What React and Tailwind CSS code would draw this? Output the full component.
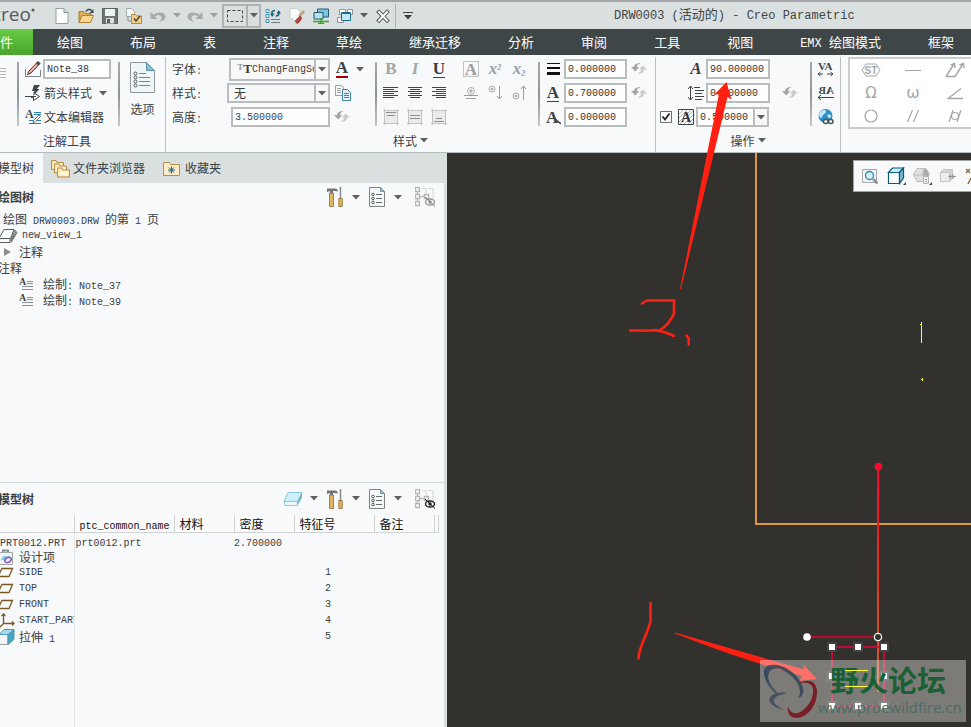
import React, { useState } from 'react';

const MENU = ['绘图', '布局', '表', '注释', '草绘', '继承迁移', '分析', '审阅', '工具', '视图', 'EMX', '框架'];

const FEATURES = [
  { name: 'SIDE', id: 1, icon: 'plane' },
  { name: 'TOP', id: 2, icon: 'plane' },
  { name: 'FRONT', id: 3, icon: 'plane' },
  { name: 'START_PART', id: 4, icon: 'csys' },
  { name: '拉伸', suffix: '1', id: 5, icon: 'extrude' },
];

// Latin text is set smaller than the Chinese text around it
const Latin = ({ children }) => (
  <span className="font-['Liberation_Mono',monospace] text-[10px] leading-none">{children}</span>
);

const Caret = () => (
  <svg width="8" height="5" viewBox="0 0 8 5" className="shrink-0">
    <path d="M0 0h8L4 4.600z" fill="#5d6060" />
  </svg>
);

const Svg = ({ size = 16, children }) => (
  <svg width={size} height={size} viewBox="0 0 16 16" fill="none" className="shrink-0">
    {children}
  </svg>
);

const IconButton = ({ label, className = 'w-6 h-6', children }) => (
  <button type="button" aria-label={label} className={`flex shrink-0 items-center justify-center ${className}`}>
    {children}
  </button>
);

const CaretButton = ({ label = '更多', className = 'w-[13px] h-6' }) => (
  <IconButton label={label} className={className}>
    <Caret />
  </IconButton>
);

const Refresh = () => (
  <IconButton label="重置" className="h-6 w-4">
    <Svg>
      <path d="M9.500 2C5.500 2 3.200 3.500 2.800 6H0l4.200 4.500L8.200 6H5.800C6 4.300 7.500 3.200 9.500 2z" fill="#a2a6a6" />
      <path d="M6.500 13c4 0 6.300-1.500 6.700-4.500H16l-4.200-4-4 4h2.400c-.2 2-1.700 3.300-3.700 4.500z" fill="#c9cccc" />
    </Svg>
  </IconButton>
);

const NumberBox = ({ label, value, className = 'w-[63px]' }) => (
  <input
    type="text"
    aria-label={label}
    defaultValue={value}
    className={`h-5 shrink-0 border-2 border-[#b9bdbd] bg-white px-[2px] font-['Liberation_Mono',monospace] text-[10px] text-[#333] outline-none ${className}`}
  />
);

const Divider = () => <div className="mt-[5px] h-16 w-[2px] shrink-0 bg-gradient-to-b from-[#a4aaaa] via-[#8d9494] to-[#c3c8c8]" />;

const Undo = ({ flip }) => (
  <svg width="16" height="16" viewBox="0 0 16 16" className={flip ? '-scale-x-100' : ''}>
    <path d="M.5 4v7h7L5 8.600C7.500 6.500 11 7 11.500 9.500c.2 1.600-.8 3-2.500 4.300 4-.6 6.500-2.500 6.500-5.500 0-4-7-5.500-12-1.600z" fill="#a7abab" />
  </svg>
);

const TitleBar = () => (
  <header className="flex h-[29px] shrink-0 items-center overflow-hidden whitespace-nowrap border-t-2 border-[#a4a5a9] bg-[#dae0df]">
    <div className="-ml-2 flex w-[58px] shrink-0 items-center pb-1 font-['Open_Sans',sans-serif] text-[19px] font-medium leading-6 text-[#55595b]">
      creo
      <svg width="4" height="12" viewBox="0 0 4 12"><circle cx="2" cy="2" r="1.500" fill="#55595b" /></svg>
    </div>
    <IconButton label="新建">
      <Svg>
        <path d="M2 .5h8l4 4v11H2z" fill="#fdfdfd" stroke="#9a9fa0" />
        <path d="M10 .5v4h4" fill="#cfe0e8" stroke="#8198a3" />
      </Svg>
    </IconButton>
    <IconButton label="打开">
      <Svg>
        <path d="M1 14.500V3.500h5l1.500 2H13v3" fill="#e0ad55" stroke="#a97c32" />
        <path d="M1 14.500l3-7h11.500l-3 7z" fill="#f9d58f" stroke="#b1843a" />
        <path d="M8 3.500C9 1 12 .8 13.500 2.500" stroke="#3d4446" strokeWidth="1.500" />
        <path d="M15.500 1v4h-4z" fill="#3d4446" />
      </Svg>
    </IconButton>
    <IconButton label="保存">
      <Svg>
        <path d="M.5 .5h15v15H.5z" fill="#6d7578" stroke="#5a6163" />
        <path d="M3 1h10v7H3z" fill="#eef3f4" />
        <path d="M4 10h8v5.500H4z" fill="#dde1e2" />
        <path d="M5 11h3v4H5z" fill="#565d60" />
      </Svg>
    </IconButton>
    <IconButton label="检入">
      <Svg>
        <path d="M.5 .5h5l3 3v5h-8z" fill="#f5f7f7" stroke="#a5abab" />
        <path d="M2 9v4h4" stroke="#868c8d" />
        <path d="M5.500 15.500V6.500h4l1 1.500h5v7.500z" fill="#f6cf86" stroke="#b68a43" />
        <path d="M8 10.500l2 2.500 4-5" stroke="#4a4a42" strokeWidth="1.500" />
      </Svg>
    </IconButton>
    <IconButton label="撤消"><Undo /></IconButton>
    <span className="opacity-50"><CaretButton /></span>
    <IconButton label="重做"><Undo flip /></IconButton>
    <span className="opacity-50"><CaretButton /></span>
    <div className="ml-[2px] flex h-6 shrink-0 border-2 border-[#adb2b2]">
      <IconButton label="框选" className="h-5 w-[22px]">
        <Svg>
          <rect x=".5" y="2.500" width="15" height="11" stroke="#3f4546" strokeDasharray="3 2" />
        </Svg>
      </IconButton>
      <CaretButton className="h-5 w-[13px] border-l-2 border-[#adb2b2]" />
    </div>
    <IconButton label="重新生成">
      <Svg>
        <path d="M1 1.500h3v3H1zM1 6.500h3v3H1zM1 11.500h3v3H1z" fill="#eaf7fb" stroke="#3f93b5" />
        <path d="M6 11.500h9M6 14.500h9" stroke="#747a7b" />
        <path d="M7 7V4.500c0-1.500 1-2 3-2" stroke="#176483" strokeWidth="1.600" />
        <path d="M5 5.500h4.500L7.200 9zM11.500 5.500H16L13.700 2z" fill="#176483" />
        <path d="M13.700 4v2c0 1.500-1 2-3 2" stroke="#176483" strokeWidth="1.600" />
      </Svg>
    </IconButton>
    <IconButton label="清除">
      <Svg>
        <path d="M1 .5h7l3 3v11l-4-1-6-4z" fill="#fbfbfb" stroke="#c9cdcd" />
        <path d="M16 4l-5 5-2-1 5-6z" fill="#c5a074" />
        <path d="M11 8l2 2-3 4.500c-1.500 1.500-4 .5-3.500-2z" fill="#b5473d" stroke="#7b2d28" strokeWidth=".6" />
      </Svg>
    </IconButton>
    <IconButton label="窗口">
      <Svg>
        <path d="M4.500 1h11v8h-11z" fill="#79c5e2" stroke="#27586b" />
        <path d="M1 4.500h9V11H1z" fill="#b6e3f2" stroke="#27586b" />
        <path d="M0 13.500h16M8 10v5M5 15.500h6" stroke="#39a824" strokeWidth="1.500" />
      </Svg>
    </IconButton>
    <IconButton label="切换窗口">
      <Svg>
        <path d="M2.500 1.500h6v5h-6zM.5 9.500h6v5h-6zM10.500 1.500h5v5h-5z" fill="#fff" stroke="#8f9596" />
        <path d="M4.500 4.500h9v8h-9z" fill="#bfe9f6" stroke="#1f6d8c" />
        <path d="M4.500 5.500h9" stroke="#1f6d8c" />
      </Svg>
    </IconButton>
    <CaretButton />
    <IconButton label="关闭" className="ml-px h-6 w-6">
      <Svg>
        <path d="M4 4l8 8.500M12 4l-8 8.500" stroke="#4c5152" strokeWidth="4" strokeLinecap="square" />
        <path d="M4 4l8 8.500M12 4l-8 8.500" stroke="#fff" strokeWidth="2" strokeLinecap="square" />
      </Svg>
    </IconButton>
    <div className="h-6 w-px shrink-0 bg-[#adb2b2]" />
    <IconButton label="自定义">
      <svg width="10" height="8" viewBox="0 0 10 8"><path d="M0 .5h10" stroke="#3f4546" /><path d="M1 3h8L5 7.500z" fill="#3f4546" /></svg>
    </IconButton>
    <h1 className="ml-[194px] font-['Liberation_Mono','Noto_Sans_CJK_SC',monospace] text-[12px] text-[#414546]">
      DRW0003 (<span className="text-[13px]">活动的</span>) - Creo Parametric
    </h1>
  </header>
);

const MenuBar = () => (
  <nav className="flex h-[26px] shrink-0 items-center overflow-hidden whitespace-nowrap bg-[#3e4647] text-[13px] text-white">
    <button type="button" className="h-full w-[33px] shrink-0 overflow-hidden bg-gradient-to-b from-[#66cc45] to-[#48a52e] text-left">
      件
    </button>
    <div className="flex items-center gap-[47px] pl-6">
      {MENU.map((item) => (
        <button key={item} type="button" className="shrink-0">
          {item === 'EMX' ? (
            <><span className="font-['Liberation_Mono',monospace] text-[12px] leading-none">EMX </span>绘图模式</>
          ) : item}
        </button>
      ))}
    </div>
  </nav>
);

const AlignIcon = ({ lines }) => (
  <Svg>
    <path d={lines} stroke="#3f4546" strokeWidth="1" />
  </Svg>
);

const FrameIcon = ({ lines }) => (
  <Svg>
    <path d="M2 2h12v12H2z" fill="#e9ebeb" />
    <path d="M0 1.500h16M0 14.500h16M1.500 0v16M14.500 0v16" stroke="#bfc3c3" />
    <path d={lines} stroke="#8b9090" />
  </Svg>
);

const Serif = ({ className = '', children }) => (
  <span className={`font-['Liberation_Serif',serif] text-[17px] font-bold leading-4 ${className}`}>{children}</span>
);

const NoteTools = () => (
  <section className="flex shrink-0 flex-col">
    <div className="flex h-[72px]">
      <div className="w-[17px] shrink-0 pt-[10px]">
        <svg width="6" height="12" viewBox="0 0 6 12"><path d="M0 1.500h6M0 4.500h6M0 7.500h6M0 10.500h6" stroke="#b4b8b8" /></svg>
      </div>
      <Divider />
      <div className="flex w-[99px] flex-col pl-[6px]">
        <div className="flex h-6 items-center gap-[2px]">
          <Svg>
            <path d="M.5 8v7.500h15V9" stroke="#7d8385" />
            <path d="M13 .5l2 2L6 12l-3.500 1.500L4 10z" fill="#eab3a2" stroke="#6a2d27" />
            <path d="M13 .5l2 2-2 2-2-2z" fill="#444" />
          </Svg>
          <NumberBox label="注解名称" value="Note_38" className="w-[68px]" />
        </div>
        <button type="button" className="flex h-6 items-center gap-[3px] whitespace-nowrap">
          <Svg>
            <path d="M0 11.500h11" stroke="#3f4546" />
            <path d="M8.500 7.500l6 4-6 4v-3H6" stroke="#3f4546" />
            <path d="M9 0h6l-3 4h2.500L8 11l1.500-5H7z" fill="#3f4546" />
          </Svg>
          箭头样式<span className="ml-1"><Caret /></span>
        </button>
        <button type="button" className="flex h-6 items-center gap-[3px] whitespace-nowrap">
          <svg width="16" height="16" viewBox="0 0 16 16" fill="none">
            <text x="0" y="9" fontSize="12" fontWeight="bold" fontFamily="Liberation Serif" fill="#3f4546">A</text>
            <path d="M9 3.500h7M9 5.500h7M4 11.500h12M4 14.500h12" stroke="#287fa6" />
            <path d="M14 6l1.500 1.500L10 13l-2 .5.500-2z" fill="#fff" stroke="#4f5657" strokeWidth=".8" />
          </svg>
          文本编辑器
        </button>
      </div>
      <Divider />
      <button type="button" className="flex w-[45px] flex-col items-center gap-[6px] pt-[5px] leading-5">
        <svg width="25" height="31" viewBox="0 0 25 31" fill="none" className="shrink-0">
          <path d="M.5 .5h16l8 8v22H.5z" fill="#eef6f9" stroke="#8f9899" />
          <path d="M16.500 .5v8h8z" fill="#8dbccf" stroke="#5c93aa" />
          <circle cx="5.500" cy="11.500" r="1.500" stroke="#555b5c" /><circle cx="5.500" cy="15.500" r="1.500" stroke="#555b5c" />
          <circle cx="5.500" cy="19.500" r="1.500" stroke="#555b5c" /><circle cx="5.500" cy="23.500" r="1.500" stroke="#555b5c" />
          <path d="M9 11.500h7M9 15.500h11M9 19.500h11M9 23.500h11" stroke="#7c8384" />
        </svg>
        选项
      </button>
    </div>
    <h2 className="flex h-[23px] items-center pl-[43px]">注解工具</h2>
  </section>
);

const StyleTools = () => (
  <section className="flex shrink-0 flex-col border-l border-[#b9bebe]">
    <div className="flex h-[72px]">
      <div className="flex w-[209px] shrink-0 flex-col pl-[6px]">
        <div className="flex h-6 items-center">
          <label htmlFor="font" className="w-[57px]">字体<Latin>:</Latin></label>
          <div className="relative flex h-[23px] w-[101px] items-center border-2 border-[#b9bdbd] bg-[#f8f8f8]">
            <span className="flex w-[21px] justify-end font-['Liberation_Serif',serif] text-[13px] font-bold leading-4">
              <span className="text-[9px] leading-3 text-[#999]">T</span>T
            </span>
            <select id="font" className="h-full w-[62px] appearance-none overflow-hidden bg-transparent font-['Liberation_Mono',monospace] text-[10px] outline-none">
              <option>ChangFangSong</option>
            </select>
            <span className="pointer-events-none absolute inset-y-0 right-0 flex w-[14px] items-center justify-center border-l-2 border-[#b9bdbd] bg-[#f8f8f8]"><Caret /></span>
          </div>
          <IconButton label="文本颜色" className="ml-1 h-6 w-4">
            <Serif className="border-b-2 border-[#a40000]">A</Serif>
          </IconButton>
          <CaretButton className="h-6 w-5" />
        </div>
        <div className="flex h-6 items-center">
          <label htmlFor="style" className="w-[55px]">样式<Latin>:</Latin></label>
          <div className="relative h-5 w-[103px] border-2 border-[#b9bdbd] bg-[#f8f8f8]">
            <select id="style" className="block h-full w-full appearance-none bg-transparent pl-[5px] leading-4 outline-none">
              <option>无</option>
            </select>
            <span className="pointer-events-none absolute inset-y-0 right-0 flex w-[14px] items-center justify-center border-l-2 border-[#b9bdbd] bg-[#f8f8f8]"><Caret /></span>
          </div>
          <IconButton label="复制样式" className="ml-[5px] h-6 w-4">
            <Svg>
              <path d="M.5 .5h6l2 2v8h-8z" fill="#f7f8f8" stroke="#9ba0a1" />
              <path d="M7.500 4.500h5l3 3v8h-8z" fill="#e6f4f9" stroke="#3b83a1" />
              <path d="M2 3.500h4M2 5.500h4M2 7.500h4" stroke="#9ba0a1" />
              <path d="M9 8.500h5M9 10.500h5M9 12.500h5" stroke="#3b83a1" />
            </Svg>
          </IconButton>
        </div>
        <div className="flex h-6 items-center">
          <label htmlFor="height" className="w-[59px]">高度<Latin>:</Latin></label>
          <input id="height" type="text" defaultValue="3.500000" className="mr-1 h-5 w-[99px] border-2 border-[#b9bdbd] bg-white px-[2px] font-['Liberation_Mono',monospace] text-[10px] outline-none" />
          <Refresh />
        </div>
      </div>
      <Divider />
      <div className="grid w-[161px] shrink-0 grid-cols-[24px_24px_32px_24px_24px_24px] grid-rows-3 pl-[2px]">
        <IconButton label="粗体"><Serif className="text-[#a3a7a7]">B</Serif></IconButton>
        <IconButton label="斜体"><Serif className="italic text-[#a3a7a7]">I</Serif></IconButton>
        <IconButton label="下划线"><Serif className="border-b border-[#3f4546]">U</Serif></IconButton>
        <IconButton label="文本框"><span className="flex h-4 w-4 justify-center border border-[#bfc3c3] leading-3"><Serif className="text-[#9a9e9e]">A</Serif></span></IconButton>
        <IconButton label="上标"><Serif className="italic text-[#9a9e9e]">x<sup className="text-[8px]">2</sup></Serif></IconButton>
        <IconButton label="下标"><Serif className="italic text-[#9a9e9e]">x<sub className="text-[8px]">2</sub></Serif></IconButton>

        <IconButton label="左对齐"><AlignIcon lines="M0 2.500h15M0 4.500h11M0 6.500h15M0 8.500h11M0 10.500h15M0 12.500h11" /></IconButton>
        <IconButton label="居中"><AlignIcon lines="M1 2.500h14M3 4.500h10M1 6.500h14M3 8.500h10M1 10.500h14M3 12.500h10" /></IconButton>
        <IconButton label="右对齐"><AlignIcon lines="M1 2.500h14M5 4.500h10M1 6.500h14M5 8.500h10M1 10.500h14M5 12.500h10" /></IconButton>
        <IconButton label="符号基线"><Svg><circle cx="8" cy="6" r="3.500" stroke="#aaaeae" /><path d="M8 4v4M6 6h4M1 10.500h14M3 13.500h10" stroke="#999d9d" /></Svg></IconButton>
        <IconButton label="下移"><Svg><circle cx="5" cy="4" r="3" stroke="#aaaeae" /><path d="M5 2.500v3M3.500 4h3M12.500 1v13M10 11l2.500 3 2.500-3" stroke="#999d9d" /></Svg></IconButton>
        <IconButton label="上移"><Svg><circle cx="5" cy="11" r="3" stroke="#aaaeae" /><path d="M5 9.500v3M3.500 11h3M12.500 15V1M10 4l2.500-3 2.500 3" stroke="#999d9d" /></Svg></IconButton>

        <IconButton label="顶部"><FrameIcon lines="M3 3.500h10M4 6.500h8" /></IconButton>
        <IconButton label="中部"><FrameIcon lines="M3 6.500h10M3 9.500h10" /></IconButton>
        <IconButton label="底部"><FrameIcon lines="M5 9.500h6M3 12.500h10" /></IconButton>
      </div>
      <Divider />
      <div className="flex w-[115px] shrink-0 flex-col pl-[5px]">
        <div className="flex h-6 items-center gap-[3px]">
          <Svg><path d="M2 2.500h13" stroke="#111" /><path d="M2 7h13" stroke="#111" strokeWidth="2" /><path d="M2 12.500h13" stroke="#111" strokeWidth="3" /></Svg>
          <NumberBox label="线宽" value="0.000000" />
          <span className="ml-px"><Refresh /></span>
        </div>
        <div className="flex h-6 items-center gap-[3px]">
          <span className="flex w-4 justify-center"><Serif className="border-b border-[#3f4546]">A</Serif></span>
          <NumberBox label="宽度因子" value="0.700000" />
          <span className="ml-px"><Refresh /></span>
        </div>
        <div className="flex h-6 items-center gap-[3px]">
          <Svg>
            <text x="1" y="14" fontSize="17" fontWeight="bold" fontFamily="Liberation Serif" fill="#3f4546">A</text>
            <path d="M9 9l7 6" stroke="#3f4546" strokeWidth="1.500" />
          </Svg>
          <NumberBox label="倾斜角" value="0.000000" />
        </div>
      </div>
    </div>
    <h2 className="flex h-[23px] items-center justify-center gap-[3px]">样式<Caret /></h2>
  </section>
);

const OperationTools = () => {
  const [checked, setChecked] = useState(true);

  return (
    <section className="flex shrink-0 flex-col border-l border-[#b9bebe]">
      <div className="flex h-[72px]">
        <div className="flex w-[154px] shrink-0 flex-col pl-1">
          <div className="flex h-6 items-center pl-7">
            <span className="mr-[2px] w-4 text-center"><Serif className="italic">A</Serif></span>
            <NumberBox label="角度" value="90.000000" className="w-[64px]" />
          </div>
          <div className="flex h-6 items-center pl-7">
            <span className="mr-[2px]">
              <Svg><path d="M2.500 1v14M0 4l2.500-3L5 4M0 12l2.500 3L5 12M6 2.500h6M7 5.500h9M7 8.500h7M7 11.500h9M7 14.500h7" stroke="#3f4546" /></Svg>
            </span>
            <NumberBox label="行间距" value="0.500000" className="mr-3 w-[64px]" />
            <Refresh />
          </div>
          <div className="flex h-6 items-center">
            <label className="relative mr-[6px] grid h-3 w-3">
              <input
                type="checkbox"
                aria-label="打断剖面线"
                checked={checked}
                onChange={(e) => setChecked(e.target.checked)}
                className="h-3 w-3 appearance-none border border-[#6d7273] bg-white"
              />
              {checked && (
                <svg width="12" height="12" viewBox="0 0 12 12" fill="none" className="pointer-events-none absolute inset-0">
                  <path d="M2.500 5.500L5 8.500l4.500-6" stroke="#222" strokeWidth="1.800" />
                </svg>
              )}
            </label>
            <Svg>
              <path d="M.5 .5h15v15H.5z" fill="#fff" stroke="#3f4546" />
              <path d="M1 5l4-4M1 9l8-8M1 13l12-12M2 15L15 2M6 15l9-9M10 15l5-5M13 15l2-2" stroke="#9a9fa0" strokeWidth=".8" />
              <text x="3" y="13" fontSize="14" fontWeight="bold" fontFamily="Liberation Serif" fill="#333">A</text>
            </Svg>
            <div className="ml-[2px] flex">
              <NumberBox label="边距" value="0.500000" className="w-[59px]" />
              <CaretButton className="h-5 w-[14px] border-y-2 border-r-2 border-[#b9bdbd] bg-[#f8f8f8]" />
            </div>
          </div>
        </div>
        <Divider />
        <div className="flex w-7 shrink-0 flex-col items-center">
          <IconButton label="字距">
            <svg width="18" height="16" viewBox="0 0 18 16" fill="none">
              <text x="1" y="9" fontSize="11" fontWeight="bold" fontFamily="Liberation Serif" fill="#3f4546">VA</text>
              <path d="M1 13h5M10 13h6M3.500 11L1 13l2.500 2M13.500 11l2.500 2-2.500 2" stroke="#3f4546" />
            </svg>
          </IconButton>
          <IconButton label="镜像">
            <svg width="18" height="16" viewBox="0 0 18 16" fill="none">
              <text x="-17" y="9" transform="scale(-1 1)" fontSize="11" fontWeight="bold" fontFamily="Liberation Serif" fill="#3f4546">AB</text>
              <path d="M1 12.500h16M4 10l-3 2.500L4 15" stroke="#3f4546" />
            </svg>
          </IconButton>
          <IconButton label="超链接">
            <Svg>
              <circle cx="7.500" cy="7" r="7" fill="#2f8fc4" />
              <path d="M3 2c3-2 6-1 5 1S5 5 4 8 1 7 1 6s1-3 2-4zM9 6c3-1 5 0 4 2s-3 1-4-2z" fill="#bfe6f6" />
              <rect x="5.500" y="10.500" width="4.500" height="4" rx="2" fill="#fff" stroke="#4b5152" strokeWidth="1.500" />
              <rect x="10.500" y="10.500" width="4.500" height="4" rx="2" fill="#fff" stroke="#4b5152" strokeWidth="1.500" />
            </Svg>
          </IconButton>
        </div>
      </div>
      <h2 className="flex h-[23px] items-center justify-center gap-[3px]">操作<Caret /></h2>
    </section>
  );
};

const SymbolPalette = () => (
  <section className="min-w-0 flex-1 overflow-hidden border-l border-[#b9bebe] pl-[7px]">
    <div className="grid h-[72px] w-[130px] grid-cols-3 grid-rows-3 place-items-center border-2 border-[#c9cdcd] bg-white">
      <IconButton label="统计公差">
        <svg width="20" height="14" viewBox="0 0 20 14" fill="none">
          <path d="M5 1h10l4 6-4 6H5L1 7z" stroke="#a3a7a7" />
          <text x="3.500" y="10.500" fontSize="10" fontFamily="Liberation Sans" fontWeight="bold" fill="#a3a7a7">ST</text>
        </svg>
      </IconButton>
      <IconButton label="直线度"><Svg><path d="M0 8.500h16" stroke="#a3a7a7" /></Svg></IconButton>
      <IconButton label="全跳动"><svg width="20" height="16" viewBox="0 0 20 16" fill="none"><path d="M1 14.500h9L18 2M1 14.500L9 2M5.500 3L9.500 1.500l.5 4.500M14.500 3l4-1.500.5 4.500" stroke="#a3a7a7" strokeWidth="1.400" /></svg></IconButton>
      <IconButton label="欧米茄"><span className="font-['DejaVu_Sans',sans-serif] text-[15px] text-[#a3a7a7]">Ω</span></IconButton>
      <IconButton label="小写欧米茄"><span className="font-['DejaVu_Sans',sans-serif] text-[16px] text-[#a3a7a7]">ω</span></IconButton>
      <IconButton label="倾斜度"><Svg><path d="M14 3.500L1 13.500h15" stroke="#a3a7a7" strokeWidth="1.400" /></Svg></IconButton>
      <IconButton label="圆度"><Svg><circle cx="8" cy="8" r="6" stroke="#a3a7a7" strokeWidth="1.200" /></Svg></IconButton>
      <IconButton label="平行度"><Svg><path d="M2.500 14l5-12M8.500 14l5-12" stroke="#a3a7a7" strokeWidth="1.200" /></Svg></IconButton>
      <IconButton label="圆柱度"><Svg><circle cx="8" cy="8" r="3.500" stroke="#a3a7a7" strokeWidth="1.200" /><path d="M2 14L6 2M10 14l4-12" stroke="#a3a7a7" strokeWidth="1.200" /></Svg></IconButton>
    </div>
  </section>
);

const Folder = ({ x, y }) => (
  <g transform={`translate(${x} ${y})`}>
    <path d="M.5 10.500V1.500H5l1 2h6.500v7z" fill="#fbe6b4" stroke="#b58e4b" />
    <path d="M2 5h9v4H2z" fill="#fff5d8" />
  </g>
);

const TreeTools = ({ active }) => (
  <div className="flex items-center">
    {active && (
      <>
        <IconButton label="显示">
          <svg width="20" height="16" viewBox="0 0 20 16" fill="none">
            <path d="M5 1.500h14l-4.500 9H1z" fill="#cdeffa" stroke="#8cc9dd" />
            <path d="M1 10.500h13.500v4H2z" fill="#e9f9fd" stroke="#8cc9dd" />
            <path d="M19 1.500v5l-4.500 8v-4z" fill="#6fb8d2" />
          </svg>
        </IconButton>
        <CaretButton className="h-6 w-[18px]" />
      </>
    )}
    <IconButton label="设置">
      <svg width="18" height="20" viewBox="0 0 18 20" fill="none">
        <path d="M3.500 6h4v13.500h-4z" fill="#dfb565" stroke="#8f6b30" strokeWidth=".8" />
        <path d="M1 1.500h8c2 0 2.500 1 3 3L9 4H7v2H4V4L1 5z" fill="#717577" />
        <path d="M14.500 0v12" stroke="#85898b" strokeWidth="1.500" />
        <path d="M12.800 11.500h3.500v8h-3.500z" fill="#e0b55f" stroke="#8f6b30" strokeWidth=".8" />
      </svg>
    </IconButton>
    <CaretButton className="h-6 w-[18px]" />
    <IconButton label="显示列">
      <svg width="16" height="20" viewBox="0 0 16 20" fill="none">
        <path d="M.5 .5h11l4 4v15H.5z" fill="#f6f9fa" stroke="#7f8586" />
        <path d="M11.500 .5v4h4z" fill="#92bdce" stroke="#7599a6" />
        <circle cx="4" cy="7.500" r="1.300" stroke="#555b5c" /><circle cx="4" cy="11.500" r="1.300" stroke="#555b5c" /><circle cx="4" cy="15.500" r="1.300" stroke="#555b5c" />
        <path d="M7 7.500h6M7 11.500h6M7 15.500h6" stroke="#6a7071" />
      </svg>
    </IconButton>
    <CaretButton className="h-6 w-[18px]" />
    <IconButton label="隐藏" className="ml-[6px] h-6 w-6">
      <svg width="21" height="20" viewBox="0 0 21 20" fill="none">
        <path d="M.5 .5h4v4h-4zM.5 7.500h4v4h-4zM.5 14.500h4v4h-4zM2.500 5v2M2.500 12v2M5 9.500h4M9.500 7.500h4v4h-4z" stroke="#b3b7b7" strokeWidth="1.300" />
        <path d="M7 1.500h4v5M13 1.500h5v10" stroke="#d5d8d8" />
        <ellipse cx="15" cy="15" rx="4.500" ry="3" stroke={active ? '#222' : '#999'} strokeWidth="1.400" />
        <circle cx="15" cy="15" r="1.700" fill={active ? '#222' : '#999'} />
        <path d="M10 10l10 9.500" stroke={active ? '#111' : '#777'} />
      </svg>
    </IconButton>
  </div>
);

const NoteIcon = () => (
  <svg width="16" height="14" viewBox="0 0 16 14">
    <text x="0" y="8" fontSize="10" fontWeight="bold" fontFamily="Liberation Serif" fill="#3f4546">A</text>
    <path d="M8 4.500h6M8 6.500h6M3 9.500h11M3 12.500h11" stroke="#8b9090" />
  </svg>
);

const DrawingTree = () => (
  <section className="flex flex-[11] flex-col">
    <div className="flex h-7 items-center justify-between pr-[7px]">
      <h2 className="-ml-[2px] font-bold">绘图树</h2>
      <TreeTools />
    </div>
    <ul className="whitespace-pre leading-4">
      <li className="h-[17px] pl-[3px]">绘图<Latin> DRW0003.DRW </Latin>的第<Latin> 1 </Latin>页</li>
      <li className="flex h-4 items-center gap-1">
        <svg width="18" height="16" viewBox="0 0 18 16" fill="none">
          <path d="M4 1.500h10l-3.500 9H-1zM-1 10.500v4h11v-4M14 1.500l3 3-6 10M15 2.500l-4 9M16 4l-5 9" stroke="#5a5f60" />
        </svg>
        <Latin>new_view_1</Latin>
      </li>
      <li className="flex h-4 items-center gap-2 pl-1">
        <svg width="7" height="8" viewBox="0 0 7 8"><path d="M0 0l7 4-7 4z" fill="#888c8c" /></svg>
        注释
      </li>
      <li className="-ml-[2px] h-4">注释</li>
      {['Note_37', 'Note_39'].map((note) => (
        <li key={note} className="flex h-4 items-center pl-[19px]">
          <NoteIcon />
          <span className="ml-2">绘制<Latin>: {note}</Latin></span>
        </li>
      ))}
    </ul>
  </section>
);

const FeatureIcon = ({ type }) => {
  if (type === 'plane') {
    return <Svg><path d="M2 3.500h10.500l-3.500 8H-2z" stroke="#7d5a22" strokeWidth="1.300" /></Svg>;
  }
  if (type === 'csys') {
    return <Svg><path d="M3.500 1v9.500H14M3.500 10.500L-1 15M1.500 3l2-2 2 2M12 8.500l2 2-2 2" stroke="#7d5a22" strokeWidth="1.300" /></Svg>;
  }
  return (
    <Svg>
      <path d="M-1 5.500h9v10h-9z" fill="#f3f5f6" stroke="#9da2a3" />
      <path d="M-1 5.500l5-5h10l-5.500 5z" fill="#a5dbef" stroke="#5197b1" />
      <path d="M8 5.500l6-5v10l-6 5z" fill="#4aa3c6" stroke="#5197b1" />
    </Svg>
  );
};

const ModelTree = () => (
  <section className="flex flex-[9] flex-col border-t border-[#d3dada]">
    <div className="flex h-8 items-center justify-between pr-[7px]">
      <h2 className="-ml-[2px] font-bold">模型树</h2>
      <TreeTools active />
    </div>
    <div className="flex flex-1 flex-col">
      <table className="w-[438px] table-fixed border-collapse whitespace-nowrap text-left leading-4">
        <colgroup>
          <col className="w-[74px]" />
          <col className="w-[100px]" />
          <col className="w-[60px]" />
          <col className="w-[60px]" />
          <col className="w-[80px]" />
          <col className="w-[60px]" />
          <col className="w-1" />
        </colgroup>
        <thead className="border-b border-[#cfd3d3] bg-[#fafafa] text-[#111]">
          <tr className="h-[18px]">
            {['', 'ptc_common_name', '材料', '密度', '特征号', '备注', ''].map((col, i) => (
              <th key={i} className="border-r border-[#cfd3d3] p-0 align-bottom font-normal">
                <span className={i === 6 ? '' : 'pl-[5px]'}>{i === 1 ? <Latin>{col}</Latin> : col}</span>
              </th>
            ))}
          </tr>
        </thead>
        <tbody>
          <tr className="h-4">
            <td className="border-r border-[#e4e8e8] p-0"><Latin>PRT0012.PRT</Latin></td>
            <td className="p-0 pl-px"><Latin>prt0012.prt</Latin></td>
            <td className="p-0" />
            <td className="p-0"><Latin>2.700000</Latin></td>
            <td className="p-0" colSpan={3} />
          </tr>
          <tr className="h-4">
            <td className="border-r border-[#e4e8e8] p-0">
              <div className="flex h-4 items-center gap-[3px]">
                <Svg>
                  <path d="M-1 3.500h13.500v12H-1z" fill="#f1f3f4" stroke="#a2a6a7" />
                  <path d="M3 3V1.500h5V3" stroke="#888d8e" strokeWidth="2" />
                  <path d="M3 7h6l-2 4H1z" fill="#86cbe3" />
                  <ellipse cx="8" cy="11" rx="3.500" ry="2.300" transform="rotate(-25 8 11)" fill="#ece2f7" stroke="#7a55ac" strokeWidth="1.400" />
                </Svg>
                设计项
              </div>
            </td>
            <td className="p-0" colSpan={6} />
          </tr>
          {FEATURES.map((f) => (
            <tr key={f.id} className="h-4">
              <td className="overflow-hidden border-r border-[#e4e8e8] p-0">
                <div className="flex h-4 items-center gap-[3px]">
                  <FeatureIcon type={f.icon} />
                  {f.suffix ? <span>{f.name}<Latin> {f.suffix}</Latin></span> : <Latin>{f.name}</Latin>}
                </div>
              </td>
              <td className="p-0" colSpan={3} />
              <td className="p-0 pl-[31px]"><div className="flex h-4 items-center"><Latin>{f.id}</Latin></div></td>
              <td className="p-0" colSpan={2} />
            </tr>
          ))}
        </tbody>
      </table>
      <div className="w-[75px] flex-1 border-r border-[#e4e8e8]" />
    </div>
  </section>
);

const Sidebar = () => (
  <aside className="flex w-[447px] shrink-0 flex-col border-r-[3px] border-[#dae0df] bg-[#f7f9fb]">
    <div className="flex h-[30px] shrink-0 items-center bg-[#dae0df]">
      <button type="button" className="flex h-full w-[43px] items-center overflow-hidden whitespace-nowrap bg-[#f7f9fb]">
        <span className="-ml-[2px]">模型树</span>
      </button>
      <button type="button" className="ml-2 flex items-center gap-[3px]">
        <svg width="19" height="19" viewBox="0 0 19 19" fill="none">
          <Folder x={0} y={0} /><Folder x={3} y={3.5} /><Folder x={6} y={7.5} />
        </svg>
        文件夹浏览器
      </button>
      <button type="button" className="ml-[18px] flex items-center gap-[5px]">
        <svg width="17" height="15" viewBox="0 0 17 15" fill="none">
          <path d="M.5 14.500v-13h6l1 2h9v11z" fill="#fdecc4" stroke="#b58e4b" />
          <path d="M8.500 5.500v7M5 9h7M6 6.500l5 5M11 6.500l-5 5" stroke="#14688c" />
        </svg>
        收藏夹
      </button>
    </div>
    <DrawingTree />
    <ModelTree />
  </aside>
);

const HANDLES = [[832, 647], [858, 647], [884, 647], [832, 676], [884, 676], [832, 706], [858, 706], [884, 706]];

const Canvas = () => (
  <main className="relative min-w-0 flex-1 overflow-hidden bg-[#33312d]">
    <svg className="absolute inset-0 h-full w-full" fill="none">
      <defs>
        <linearGradient id="axis" x1="0" y1="466" x2="0" y2="692" gradientUnits="userSpaceOnUse">
          <stop offset="0" stopColor="#ff0030" />
          <stop offset=".5" stopColor="#e03a20" />
          <stop offset="1" stopColor="#c8622a" />
        </linearGradient>
      </defs>
      <g transform="translate(-447 -153)">
        <path d="M756 153v371h3000" stroke="#e0973f" strokeWidth="2" />
        <path d="M921.500 322v21M920 324.500h1M922.500 378v3M921 379.500h1" stroke="#ffff20" />
        <path d="M878 466v226" stroke="url(#axis)" strokeWidth="2" />
        <circle cx="878.500" cy="466.500" r="3.500" fill="#ff0030" stroke="#c04028" strokeWidth=".6" />
        <path d="M807 637h71" stroke="#e00030" strokeWidth="1.400" />
        <rect x="832" y="647" width="52" height="59" stroke="#f0003a" strokeWidth="1.500" />
        {HANDLES.map(([x, y]) => (
          <g key={`${x}-${y}`}>
            <rect x={x - 5} y={y - 5} width="10" height="10" fill="#434343" />
            <rect x={x - 3} y={y - 3} width="6" height="6" fill="#fff" />
          </g>
        ))}
        <circle cx="807" cy="637" r="3.800" fill="#fff" />
        <circle cx="878" cy="637" r="3.600" fill="#33312d" stroke="#fff" strokeWidth="1.300" />
      </g>
    </svg>
    <div className="absolute right-0 top-[7px] flex h-8 w-[118px] items-center overflow-hidden border border-r-0 border-[#a3a5a5] bg-[#f7f9fb] pl-[3px]">
      <IconButton label="缩放" className="h-6 w-[26px]">
        <Svg>
          <path d="M.5 1.500h14v13H.5z" fill="#f2f3f3" stroke="#a5a9a9" />
          <circle cx="7.500" cy="7.500" r="4" fill="#d7f2fb" stroke="#2e86a8" strokeWidth="1.300" />
          <path d="M11 11l4.500 4.500" stroke="#8c9192" strokeWidth="2.500" />
        </Svg>
      </IconButton>
      <IconButton label="显示样式" className="h-6 w-[26px]">
        <svg width="19" height="18" viewBox="0 0 19 18" fill="none">
          <path d="M1.500 5.500h11v11h-11z" fill="#fff" stroke="#0d5a7b" strokeWidth="1.200" />
          <path d="M1.500 5.500l4-4.500h11l-4 4.500z" fill="#c9eef9" stroke="#0d5a7b" strokeWidth="1.200" />
          <path d="M12.500 5.500l4-4.500v10l-4 5.500z" fill="#79bad2" stroke="#0d5a7b" strokeWidth="1.200" />
          <path d="M19 15v3h-3z" fill="#444" />
        </svg>
      </IconButton>
      <IconButton label="已保存方向" className="h-6 w-[26px]">
        <svg width="19" height="18" viewBox="0 0 19 18" fill="none">
          <path d="M4 1.500h8l4 6-4 7H4l-3.500-7z" fill="#dfe1e1" stroke="#b9bdbd" />
          <path d="M0 8h10M12 1c3 2 4 5 4 8h-6c0-3 0-6 2-8z" fill="#a9adad" stroke="#b9bdbd" />
          <path d="M10.500 9.500h5v7h-5z" fill="#f3f4f4" stroke="#b0b4b4" />
          <path d="M12 12.500h2M12 14.500h2" stroke="#999" /><path d="M19 15v3h-3z" fill="#444" />
        </svg>
      </IconButton>
      <IconButton label="视图管理器" className="h-6 w-[26px]">
        <Svg>
          <path d="M.5 4.500h9v9h-9z" fill="#eceeee" stroke="#c3c6c6" />
          <path d="M.5 4.500l3-3h9l-3 3zM9.500 4.500l3-3v9l-3 3z" fill="#d2d5d5" stroke="#c3c6c6" />
          <path d="M9 8.500h7M13 6v5M9 8.500l2-2M9 8.500l2 2" stroke="#8c9192" />
        </Svg>
      </IconButton>
      <IconButton label="基准显示">
        <Svg>
          <path d="M1 1l4 4M5 1L1 5M10 1l4 4M14 1l-4 4M6 10l-3 6" stroke="#8a6a35" strokeWidth="1.400" />
        </Svg>
      </IconButton>
    </div>
  </main>
);

// Red pen marks and the forum stamp lie over every panel
const Markup = () => (
  <svg className="pointer-events-none absolute left-0 top-0" width="971" height="727" fill="none">
    <g fill="#ff2012">
      <path d="M680 289L719 94l-5 1 12.500-13 5 17.500-4-2.500L681 289z" />
      <path d="M675 632.500l129 37-.5-4.500L817 679l-18 2 3-5c-45-12-85-26-127-42.500z" />
    </g>
    <g stroke="#ff2012" strokeWidth="2.600" strokeLinecap="round" strokeLinejoin="round">
      <path d="M642 303.500l5-3h27v13c-3 7-8 13-14 16.500-8 1-20 .5-30 .5M654 330c7 1 14 3 20 6M686.500 335.500l2.200 3v6" />
      <path d="M650.500 603v18.500c-3 11-7 18-10 27-1 3-2 6-2 10" />
    </g>
    <rect x="760" y="660" width="206" height="62" fill="#fff" fillOpacity=".36" />
    <path d="M769 684c-9-12-6-21 8-19 12 2 24 13 26 23 1 6-1 9-5 10 5-7 0-17-9-24-12-9-24-8-20 10z" fill="#34475a" fillOpacity=".9" />
    <path d="M764 670c0 12 6 20 16 26-7-8-14-16-13-25zM787 693c-12-2-20 4-17 9 2 4 7 6 14 8-7-4-11-7-10-10 1-4 6-5 13-7z" fill="#34475a" fillOpacity=".8" />
    <path d="M799 683c10-5 18-2 18 9 0 12-8 25-20 26-8 0-10-6-9-12 2 8 8 9 14 5 8-6 12-15 11-22-1-6-6-7-14-6z" fill="#78161c" fillOpacity=".9" />
    <text x="830" y="692" fontSize="29" fontWeight="700" fontFamily="Noto Sans CJK SC, sans-serif" fill="#1b6034">野火论坛</text>
    <text x="818" y="713" fontSize="15" fontFamily="Open Sans, sans-serif" fill="#4d6c63">www.proewildfire.cn</text>
    <path d="M845 670.500h23M845 686.500h23" stroke="#ffff30" />
  </svg>
);

const App = () => {
  return (
    <div className="relative flex min-h-screen flex-col overflow-hidden bg-[#f7f9fb] font-['Noto_Sans_CJK_SC',sans-serif] text-[12px] text-[#3c4041]">
      <TitleBar />
      <MenuBar />
      <div className="flex shrink-0 overflow-hidden border-b border-[#b4bdbd] pt-[2px]">
        <NoteTools />
        <StyleTools />
        <OperationTools />
        <SymbolPalette />
      </div>
      <div className="flex flex-1">
        <Sidebar />
        <Canvas />
      </div>
      <Markup />
    </div>
  );
};

export default App;
